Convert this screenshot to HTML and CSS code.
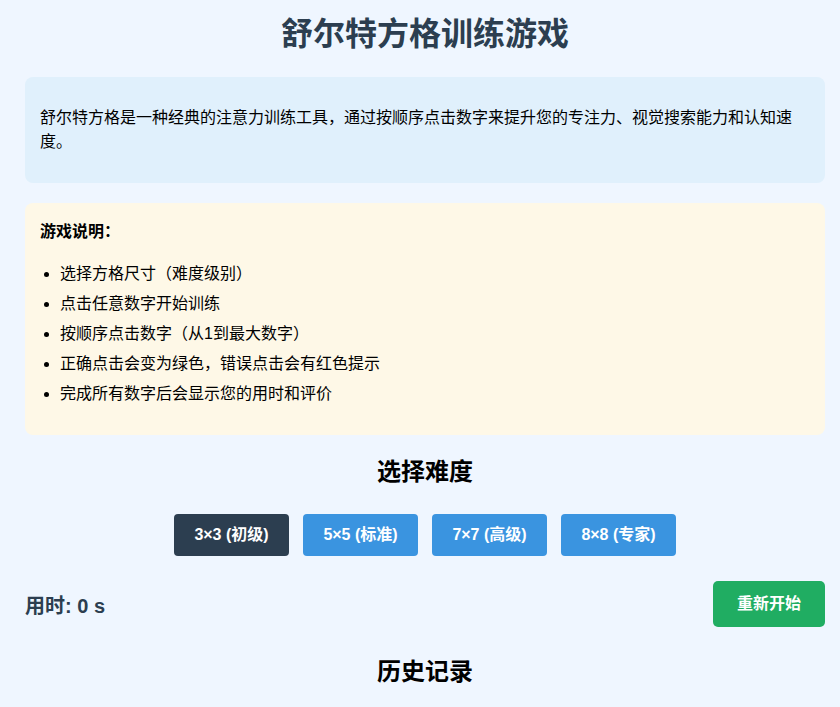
FILE: index.html
```html
<!DOCTYPE html>
<html lang="zh-CN">
<head>
<meta charset="UTF-8">
<title>舒尔特方格训练游戏</title>
<link rel="stylesheet" href="styles.css">
</head>
<body>
<div class="container">
  <h1 class="title">舒尔特方格训练游戏</h1>

  <div class="intro">
    <p>舒尔特方格是一种经典的注意力训练工具，通过按顺序点击数字来提升您的专注力、视觉搜索能力和认知速度。</p>
  </div>

  <div class="instructions">
    <h3 class="instr-title">游戏说明：</h3>
    <ul class="instr-list">
      <li>选择方格尺寸（难度级别）</li>
      <li>点击任意数字开始训练</li>
      <li>按顺序点击数字（从1到最大数字）</li>
      <li>正确点击会变为绿色，错误点击会有红色提示</li>
      <li>完成所有数字后会显示您的用时和评价</li>
    </ul>
  </div>

  <h2 class="section-title difficulty-title">选择难度</h2>
  <div class="levels">
    <button class="level-btn active">3×3 (初级)</button>
    <button class="level-btn">5×5 (标准)</button>
    <button class="level-btn">7×7 (高级)</button>
    <button class="level-btn">8×8 (专家)</button>
  </div>

  <div class="status-row">
    <div class="timer">用时: 0 s</div>
    <button class="restart-btn">重新开始</button>
  </div>

  <h2 class="section-title history-title">历史记录</h2>
</div>
</body>
</html>
```

FILE: styles.css
```css
html, body {
  margin: 0;
  padding: 0;
}

body {
  background: #eff6ff;
  font-family: "Liberation Sans", "Noto Sans CJK SC", sans-serif;
  color: #000;
  font-size: 16px;
  padding-left: 25px;
}

.container {
  width: 800px;
}

.title {
  margin: 15px 0 24px;
  font-size: 32px;
  line-height: 38px;
  font-weight: bold;
  text-align: center;
  color: #2c3e50;
}

.intro {
  background: #e0f0fc;
  border-radius: 8px;
  padding: 14px 15px;
}

.intro p {
  margin: 15px 0;
  line-height: 24px;
}

.instructions {
  margin-top: 20px;
  background: #fef8e7;
  border-radius: 8px;
  padding: 17px 15px 15px;
}

.instr-title {
  margin: 0;
  font-size: 16px;
  line-height: 24px;
  font-weight: bold;
}

.instr-list {
  margin: 18px 0 14px;
  padding-left: 20px;
}

.instr-list li {
  line-height: 24px;
  margin-bottom: 6px;
}

.instr-list li:last-child {
  margin-bottom: 0;
}

.section-title {
  font-size: 24px;
  line-height: 32px;
  font-weight: bold;
  text-align: center;
  margin: 0;
}

.difficulty-title {
  margin: 21px 0 26px;
}

.levels {
  display: flex;
  justify-content: center;
  gap: 14px;
}

.level-btn {
  font-family: inherit;
  font-size: 16px;
  line-height: 22px;
  font-weight: 600;
  color: #fff;
  background: #3a94e0;
  border: none;
  border-radius: 4px;
  padding: 10px 0;
  width: 115px;
}

.level-btn.active {
  background: #2c3e50;
}

.status-row {
  margin-top: 25px;
  display: flex;
  justify-content: space-between;
  align-items: center;
}

.timer {
  font-size: 20px;
  font-weight: bold;
  color: #2c3e50;
}

.restart-btn {
  font-family: inherit;
  font-size: 16px;
  line-height: 22px;
  font-weight: 600;
  color: #fff;
  background: #20ad62;
  border: none;
  border-radius: 5px;
  padding: 12px 24px;
}

.history-title {
  margin-top: 29px;
}
```
